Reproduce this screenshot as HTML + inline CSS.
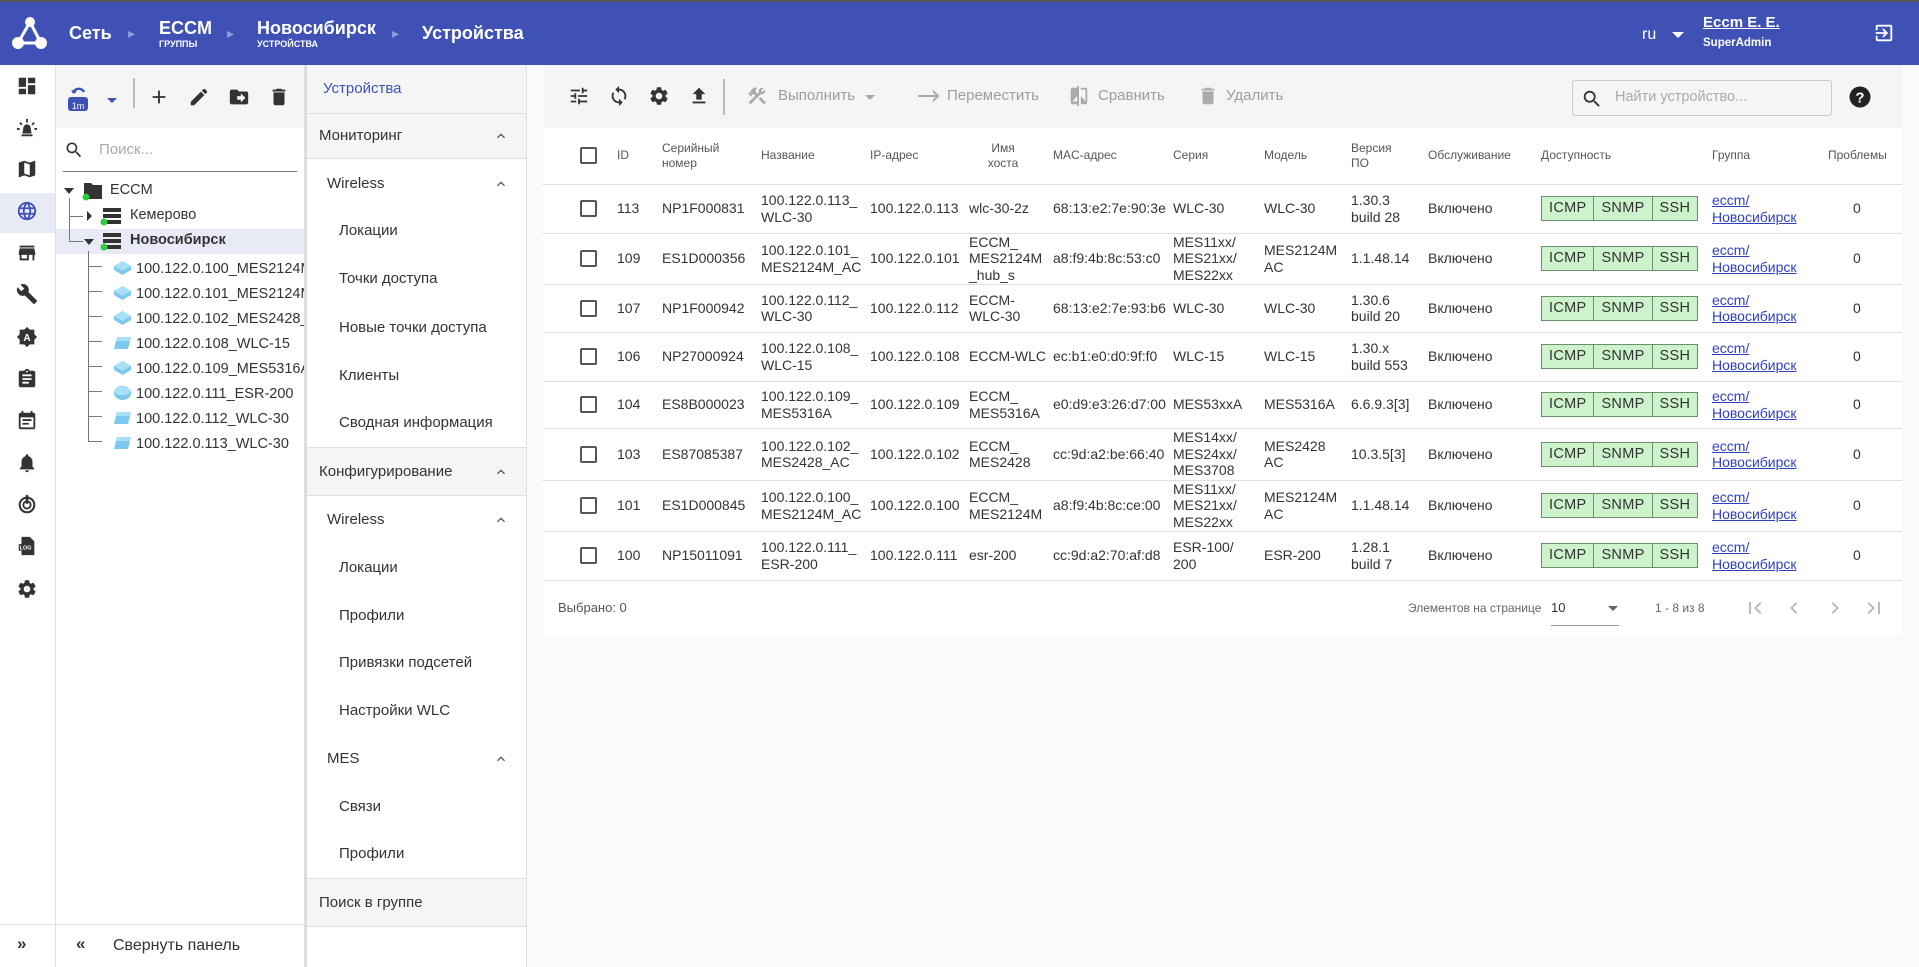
<!DOCTYPE html>
<html><head><meta charset="utf-8"><style>
*{box-sizing:border-box;margin:0;padding:0}
body{width:1919px;height:967px;overflow:hidden;font-family:"Liberation Sans",Arial,sans-serif;color:#333;background:#fafafa;position:relative;font-size:14px}
.a{position:absolute}
svg{display:block}
.hdr{left:0;top:0;width:1919px;height:65px;background:#3f51b5;border-top:2px solid #555;color:#fff}
.rail{left:0;top:65px;width:56px;height:902px;background:#fff;border-right:1px solid #e0e0e0}
.ri{position:absolute;left:16px;width:22px;height:22px}
.tree{left:56px;top:65px;width:248px;height:902px;background:#fff}
.menu{left:304px;top:65px;width:223px;height:902px;background:#fff;border-left:3px solid #ddd;border-right:1px solid #e0e0e0}
.mh{position:absolute;left:0;width:219px;background:#f5f5f5;border-bottom:1px solid #e0e0e0;font-size:15px;color:#333}
.mi{position:absolute;font-size:15px;color:#333}
.chev{position:absolute;left:186px;width:16px;height:16px}
.card{left:543px;top:65px;width:1359px;height:570px;background:#fff}
.tb{left:0;top:0;width:1359px;height:63px;background:#f5f5f5}
table{border-collapse:collapse;position:absolute;left:0;top:63px;width:1359px}
td,th{vertical-align:middle;text-align:left;font-weight:normal;line-height:16.5px;padding:0;border-bottom:1px solid #e0e0e0}
th{font-size:12px;color:#555;line-height:15px;height:56px}
.cb{width:17px;height:17px;border:2px solid #555;border-radius:2px;margin-left:37px}
.badge{display:inline-flex;border:1px solid #6b8f6b;background:#cdf3cd;height:25px;font-size:14.5px;letter-spacing:.3px}
.badge span{padding:0 7px;line-height:23px;border-right:1px solid #6b8f6b}
.badge span:last-child{border-right:none}
a{color:#3041c0;text-decoration:underline}
.trow{position:absolute;font-size:14.5px;color:#333;white-space:nowrap}
.dis{color:#9e9e9e}
</style></head><body>
<div class="a hdr">
 <svg class="a" style="left:11px;top:12px" width="38" height="38" viewBox="0 0 38 38"><g fill="#fff"><circle cx="19" cy="8" r="5"/><circle cx="7" cy="29" r="6"/><circle cx="30" cy="29" r="6"/></g><path d="M19 8L7 29M19 8l11 21M7 29h23" stroke="#fff" stroke-width="3" fill="none"/></svg>
 <div class="a" style="left:69px;top:21px;font-size:18px;font-weight:bold">Сеть</div>
 <div class="a" style="left:128px;top:23px;font-size:14px;color:#8f9ad6">▸</div>
 <div class="a" style="left:159px;top:16px;font-size:18px;font-weight:bold">ECCM</div>
 <div class="a" style="left:159px;top:37px;font-size:9px;font-weight:bold">ГРУППЫ</div>
 <div class="a" style="left:227px;top:23px;font-size:14px;color:#8f9ad6">▸</div>
 <div class="a" style="left:257px;top:16px;font-size:18px;font-weight:bold">Новосибирск</div>
 <div class="a" style="left:257px;top:37px;font-size:9px;font-weight:bold">УСТРОЙСТВА</div>
 <div class="a" style="left:392px;top:23px;font-size:14px;color:#8f9ad6">▸</div>
 <div class="a" style="left:422px;top:21px;font-size:18px;font-weight:bold">Устройства</div>
 <div class="a" style="left:1642px;top:24px;font-size:16px">ru</div>
 <div class="a" style="left:1672px;top:30px;width:0;height:0;border-left:6px solid transparent;border-right:6px solid transparent;border-top:6px solid #fff"></div>
 <div class="a" style="left:1703px;top:12px;font-size:15px;font-weight:bold;text-decoration:underline">Eccm E. E.</div>
 <div class="a" style="left:1703px;top:35px;font-size:11.5px;font-weight:bold">SuperAdmin</div>
 <svg class="a" style="left:1873px;top:20px" width="22" height="22" viewBox="0 0 24 24"><path d="M10.09 15.59L11.5 17l5-5-5-5-1.41 1.41L12.67 11H3v2h9.67l-2.58 2.59zM19 3H5c-1.11 0-2 .9-2 2v4h2V5h14v14H5v-4H3v4c0 1.1.89 2 2 2h14c1.1 0 2-.9 2-2V5c0-1.1-.9-2-2-2z" fill="#fff"/></svg>
</div>

<div class="a rail">
 <div class="a" style="left:0;top:128px;width:55px;height:40px;background:#e8eaf6"></div>
 <svg class="ri" style="top:10px" viewBox="0 0 24 24"><path fill="#333" d="M3 13h8V3H3v10zm0 8h8v-6H3v6zm10 0h8V11h-8v10zm0-18v6h8V3h-8z"/></svg>
 <svg class="ri" style="top:52px" viewBox="0 0 24 24"><path fill="#333" d="M6 19h12v2H6zM7 18l1-6a4 4 0 018 0l1 6zM11 2h2v4h-2zM3.5 6.9l1.4-1.4 2.3 2.3-1.4 1.4zM19.1 5.5l1.4 1.4-2.3 2.3-1.4-1.4zM1 12h3v2H1zm19 0h3v2h-3z"/></svg>
 <svg class="ri" style="top:93px" viewBox="0 0 24 24"><path fill="#333" d="M20.5 3l-.16.03L15 5.1 9 3 3.36 4.9c-.21.07-.36.25-.36.48V20.5c0 .28.22.5.5.5l.16-.03L9 18.9l6 2.1 5.64-1.9c.21-.07.36-.25.36-.48V3.5c0-.28-.22-.5-.5-.5zM15 19l-6-2.11V5l6 2.11V19z"/></svg>
 <svg class="ri" style="top:135px" viewBox="0 0 24 24"><path fill="#3f51b5" d="M11.99 2C6.47 2 2 6.48 2 12s4.47 10 9.990 10C17.52 22 22 17.52 22 12S17.52 2 11.99 2zm6.93 6h-2.95c-.32-1.25-.78-2.45-1.38-3.56 1.84.63 3.37 1.91 4.33 3.56zM12 4.04c.83 1.2 1.48 2.53 1.91 3.96h-3.82c.43-1.43 1.08-2.76 1.91-3.96zM4.26 14C4.1 13.36 4 12.69 4 12s.1-1.36.26-2h3.38c-.08.66-.14 1.32-.14 2 0 .68.06 1.34.14 2H4.26zm.82 2h2.95c.32 1.25.78 2.45 1.38 3.56-1.84-.63-3.37-1.9-4.33-3.56zm2.95-8H5.08c.96-1.66 2.49-2.93 4.33-3.56C8.81 5.55 8.35 6.75 8.03 8zM12 19.96c-.83-1.2-1.48-2.53-1.91-3.96h3.82c-.43 1.43-1.08 2.76-1.91 3.96zM14.34 14H9.66c-.09-.66-.16-1.32-.16-2 0-.68.07-1.35.16-2h4.68c.09.65.16 1.32.16 2 0 .68-.07 1.34-.16 2zm.25 5.56c.6-1.11 1.06-2.31 1.38-3.56h2.95c-.96 1.65-2.49 2.93-4.33 3.56zM16.36 14c.08-.66.14-1.32.14-2 0-.68-.06-1.34-.14-2h3.38c.16.64.26 1.31.26 2s-.1 1.36-.26 2h-3.38z"/></svg>
 <svg class="ri" style="top:177px" viewBox="0 0 24 24"><path fill="#333" d="M20 4H4v2h16V4zm1 10v-2l-1-5H4l-1 5v2h1v6h10v-6h4v6h2v-6h1zm-9 4H6v-4h6v4z"/></svg>
 <svg class="ri" style="top:218px" viewBox="0 0 24 24"><path fill="#333" d="M22.7 19l-9.1-9.1c.9-2.3.4-5-1.5-6.9-2-2-5-2.4-7.4-1.3L9 6 6 9 1.6 4.7C.4 7.1.9 10.1 2.9 12.1c1.9 1.9 4.6 2.4 6.9 1.5l9.1 9.1c.4.4 1 .4 1.4 0l2.3-2.3c.5-.4.5-1.1.1-1.4z"/></svg>
 <svg class="ri" style="top:261px" viewBox="0 0 24 24"><path fill="#333" d="M12 1l3 3h5v5l3 3-3 3v5h-5l-3 3-3-3H4v-5l-3-3 3-3V4h5z"/><text x="12" y="16.5" font-size="11" font-weight="bold" fill="#fff" text-anchor="middle" font-family="Liberation Sans">A</text></svg>
 <svg class="ri" style="top:303px" viewBox="0 0 24 24"><path fill="#333" d="M19 3h-4.18C14.4 1.84 13.3 1 12 1c-1.3 0-2.4.84-2.82 2H5c-1.1 0-2 .9-2 2v14c0 1.1.9 2 2 2h14c1.1 0 2-.9 2-2V5c0-1.1-.9-2-2-2zm-7 0c.55 0 1 .45 1 1s-.45 1-1 1-1-.45-1-1 .45-1 1-1zm2 14H7v-2h7v2zm3-4H7v-2h10v2zm0-4H7V7h10v2z"/></svg>
 <svg class="ri" style="top:345px" viewBox="0 0 24 24"><path fill="#333" d="M17 10H7v2h10v-2zm2-7h-1V1h-2v2H8V1H6v2H5c-1.11 0-1.99.9-1.99 2L3 19c0 1.1.89 2 2 2h14c1.1 0 2-.9 2-2V5c0-1.1-.9-2-2-2zm0 16H5V8h14v11zm-5-5H7v2h7v-2z"/></svg>
 <svg class="ri" style="top:387px" viewBox="0 0 24 24"><path fill="#333" d="M12 22c1.1 0 2-.9 2-2h-4c0 1.1.89 2 2 2zm6-6v-5c0-3.07-1.64-5.64-4.5-6.32V4c0-.83-.67-1.5-1.5-1.5s-1.5.67-1.5 1.5v.68C7.63 5.36 6 7.92 6 11v5l-2 2v1h16v-1l-2-2z"/></svg>
 <svg class="ri" style="top:428px" viewBox="0 0 24 24"><circle cx="12" cy="13" r="8" fill="none" stroke="#333" stroke-width="2.2"/><circle cx="12" cy="13" r="4" fill="none" stroke="#333" stroke-width="2"/><rect x="10.5" y="2" width="3" height="10" rx="1.5" fill="#333"/></svg>
 <svg class="ri" style="top:470px" viewBox="0 0 24 24"><path fill="#333" d="M6 2h9l5 5v15H6zM3 10h15v7H3z"/><text x="10.5" y="16" font-size="6" font-weight="bold" fill="#fff" text-anchor="middle" font-family="Liberation Sans">LOG</text></svg>
 <svg class="ri" style="top:513px" viewBox="0 0 24 24"><path fill="#333" d="M19.14 12.94c.04-.3.06-.61.06-.94 0-.32-.02-.64-.07-.94l2.03-1.58c.18-.14.23-.41.12-.61l-1.92-3.32c-.12-.22-.37-.29-.59-.22l-2.39.96c-.5-.38-1.03-.7-1.62-.94l-.36-2.54c-.04-.24-.24-.41-.48-.41h-3.84c-.24 0-.43.17-.47.41l-.36 2.54c-.59.24-1.13.57-1.62.94l-2.39-.96c-.22-.08-.47 0-.59.22L2.74 8.87c-.12.21-.08.47.12.61l2.03 1.58c-.05.3-.09.63-.09.94s.02.64.07.94l-2.03 1.58c-.18.14-.23.41-.12.61l1.92 3.32c.12.22.37.29.59.22l2.39-.96c.5.38 1.03.7 1.62.94l.36 2.54c.05.24.24.41.48.41h3.84c.24 0 .44-.17.47-.41l.36-2.54c.59-.24 1.13-.56 1.62-.94l2.39.96c.22.08.47 0 .59-.22l1.92-3.32c.12-.22.07-.47-.12-.61l-2.01-1.58zM12 15.6c-1.98 0-3.6-1.62-3.6-3.6s1.62-3.6 3.6-3.6 3.6 1.62 3.6 3.6-1.62 3.6-3.6 3.6z"/></svg>
 <div class="a" style="left:0;top:859px;width:55px;border-top:1px solid #e0e0e0"></div>
 <div class="a" style="left:17px;top:869px;font-size:17px;color:#333;font-weight:bold">»</div>
</div>

<div class="a tree">
 <div class="a" style="left:0;top:0;width:248px;height:63px;background:#f5f5f5"></div>
 <svg class="a" style="left:11px;top:20px" width="22" height="30" viewBox="0 0 22 30"><path d="M6 8a6 6 0 0111-1" stroke="#3f51b5" stroke-width="2.4" fill="none"/><path d="M4 5l3 4 3-3" fill="#3f51b5"/><rect x="1" y="12" width="20" height="14" rx="3" fill="#3f51b5"/><text x="11" y="24" font-size="9" fill="#fff" text-anchor="middle" font-family="Liberation Sans">1m</text></svg>
 <div class="a" style="left:51px;top:33px;border-left:5px solid transparent;border-right:5px solid transparent;border-top:5px solid #3f51b5"></div>
 <div class="a" style="left:77px;top:13px;height:30px;border-left:2px solid #bbb"></div>
 <svg class="a" style="left:92px;top:21px" width="22" height="22" viewBox="0 0 24 24"><path fill="#333" d="M19 13h-6v6h-2v-6H5v-2h6V5h2v6h6v2z"/></svg>
 <svg class="a" style="left:132px;top:21px" width="22" height="22" viewBox="0 0 24 24"><path fill="#333" d="M3 17.25V21h3.75L17.81 9.94l-3.75-3.75L3 17.25zM20.71 7.04a1 1 0 000-1.41l-2.34-2.34a1 1 0 00-1.41 0l-1.83 1.83 3.75 3.75 1.83-1.83z"/></svg>
 <svg class="a" style="left:172px;top:21px" width="22" height="22" viewBox="0 0 24 24"><path fill="#333" d="M20 6h-8l-2-2H4c-1.1 0-2 .9-2 2v12c0 1.1.9 2 2 2h16c1.1 0 2-.9 2-2V8c0-1.1-.9-2-2-2zm-6 12v-3h-4v-4h4V8l5 5-5 5z"/></svg>
 <svg class="a" style="left:212px;top:21px" width="22" height="22" viewBox="0 0 24 24"><path fill="#333" d="M6 19c0 1.1.9 2 2 2h8c1.1 0 2-.9 2-2V7H6v12zM19 4h-3.5l-1-1h-5l-1 1H5v2h14V4z"/></svg>
 <svg class="a" style="left:8px;top:75px" width="20" height="20" viewBox="0 0 24 24"><path fill="#333" d="M15.5 14h-.79l-.28-.27C15.41 12.59 16 11.11 16 9.5 16 5.91 13.09 3 9.5 3S3 5.91 3 9.5 5.91 16 9.5 16c1.61 0 3.09-.59 4.23-1.57l.27.28v.79l5 4.99L20.49 19l-4.99-5zm-6 0C7.01 14 5 11.99 5 9.5S7.01 5 9.5 5 14 7.01 14 9.5 11.99 14 9.5 14z"/></svg>
 <div class="a" style="left:43px;top:76px;font-size:15px;color:#aaa">Поиск...</div>
 <div class="a" style="left:7px;top:106px;width:234px;border-top:1px solid #777"></div>
 <div class="a" style="left:0;top:164px;width:248px;height:25px;background:#e8eaf6"></div>
 <div class="a" style="left:13px;top:133px;height:43px;border-left:1px solid #777"></div>
 <div class="a" style="left:13px;top:151px;width:14px;border-top:1px solid #777"></div>
 <div class="a" style="left:13px;top:176px;width:14px;border-top:1px solid #777"></div>
 <div class="a" style="left:32px;top:186px;height:191px;border-left:1px solid #777"></div>
 <div class="a" style="left:8px;top:123px;border-left:5px solid transparent;border-right:5px solid transparent;border-top:6px solid #333"></div>
 <svg class="a" style="left:26px;top:116px" width="22" height="20" viewBox="0 0 22 20"><path d="M2 2h7l2 2h9v14H2z" fill="#333"/><circle cx="4" cy="16" r="3.5" fill="#2ecc40"/></svg>
 <div class="trow" style="left:54px;top:117px">ECCM</div>
 <div class="a" style="left:31px;top:146px;border-top:5px solid transparent;border-bottom:5px solid transparent;border-left:5px solid #333"></div>
 <svg class="a" style="left:44px;top:141px" width="22" height="20" viewBox="0 0 22 20"><rect x="3" y="2" width="18" height="4" fill="#333"/><rect x="3" y="8" width="18" height="4" fill="#333"/><rect x="3" y="14" width="18" height="4" fill="#333"/><circle cx="4" cy="16" r="3.5" fill="#2ecc40"/></svg>
 <div class="trow" style="left:74px;top:142px">Кемерово</div>
 <div class="a" style="left:28px;top:174px;border-left:5px solid transparent;border-right:5px solid transparent;border-top:6px solid #333"></div>
 <svg class="a" style="left:44px;top:166px" width="22" height="20" viewBox="0 0 22 20"><rect x="3" y="2" width="18" height="4" fill="#333"/><rect x="3" y="8" width="18" height="4" fill="#333"/><rect x="3" y="14" width="18" height="4" fill="#333"/><circle cx="4" cy="16" r="3.5" fill="#2ecc40"/></svg>
 <div class="trow" style="left:74px;top:167px;font-weight:bold">Новосибирск</div>
 <div style="position:absolute;left:0;top:189px">
  <div class="a" style="left:32px;top:12px;width:14px;border-top:1px solid #777"></div>
  <div class="a" style="left:32px;top:37px;width:14px;border-top:1px solid #777"></div>
  <div class="a" style="left:32px;top:62px;width:14px;border-top:1px solid #777"></div>
  <div class="a" style="left:32px;top:87px;width:14px;border-top:1px solid #777"></div>
  <div class="a" style="left:32px;top:112px;width:14px;border-top:1px solid #777"></div>
  <div class="a" style="left:32px;top:137px;width:14px;border-top:1px solid #777"></div>
  <div class="a" style="left:32px;top:162px;width:14px;border-top:1px solid #777"></div>
  <div class="a" style="left:32px;top:187px;width:14px;border-top:1px solid #777"></div>
 </div>
 <div style="position:absolute;left:57px;top:192px;line-height:25px;font-size:14.5px;white-space:nowrap;width:191px;overflow:hidden">
  <div><svg style="display:inline-block;vertical-align:-3px;margin-right:4px" width="19" height="16" viewBox="0 0 19 16"><path d="M9.5 1L18 6v4l-8.5 5L1 10V6z" fill="#7cc8ee"/><path d="M9.5 1L18 6 9.5 11 1 6z" fill="#a8e0f8"/></svg>100.122.0.100_MES2124M</div>
  <div><svg style="display:inline-block;vertical-align:-3px;margin-right:4px" width="19" height="16" viewBox="0 0 19 16"><path d="M9.5 1L18 6v4l-8.5 5L1 10V6z" fill="#7cc8ee"/><path d="M9.5 1L18 6 9.5 11 1 6z" fill="#a8e0f8"/></svg>100.122.0.101_MES2124M</div>
  <div><svg style="display:inline-block;vertical-align:-3px;margin-right:4px" width="19" height="16" viewBox="0 0 19 16"><path d="M9.5 1L18 6v4l-8.5 5L1 10V6z" fill="#7cc8ee"/><path d="M9.5 1L18 6 9.5 11 1 6z" fill="#a8e0f8"/></svg>100.122.0.102_MES2428_AC</div>
  <div><svg style="display:inline-block;vertical-align:-3px;margin-right:4px" width="19" height="16" viewBox="0 0 19 16"><path d="M4 2h14l-3 12H1z" fill="#7cc8ee"/><path d="M4 2h14l-1 4H3z" fill="#a8e0f8"/></svg>100.122.0.108_WLC-15</div>
  <div><svg style="display:inline-block;vertical-align:-3px;margin-right:4px" width="19" height="16" viewBox="0 0 19 16"><path d="M9.5 1L18 6v4l-8.5 5L1 10V6z" fill="#7cc8ee"/><path d="M9.5 1L18 6 9.5 11 1 6z" fill="#a8e0f8"/></svg>100.122.0.109_MES5316A</div>
  <div><svg style="display:inline-block;vertical-align:-3px;margin-right:4px" width="19" height="16" viewBox="0 0 19 16"><ellipse cx="9.5" cy="8" rx="8.5" ry="7" fill="#7cc8ee"/><ellipse cx="9.5" cy="6" rx="7.5" ry="4.5" fill="#a8e0f8"/></svg>100.122.0.111_ESR-200</div>
  <div><svg style="display:inline-block;vertical-align:-3px;margin-right:4px" width="19" height="16" viewBox="0 0 19 16"><path d="M4 2h14l-3 12H1z" fill="#7cc8ee"/><path d="M4 2h14l-1 4H3z" fill="#a8e0f8"/></svg>100.122.0.112_WLC-30</div>
  <div><svg style="display:inline-block;vertical-align:-3px;margin-right:4px" width="19" height="16" viewBox="0 0 19 16"><path d="M4 2h14l-3 12H1z" fill="#7cc8ee"/><path d="M4 2h14l-1 4H3z" fill="#a8e0f8"/></svg>100.122.0.113_WLC-30</div>
 </div>
 <div class="a" style="left:0;top:859px;width:248px;border-top:1px solid #e0e0e0"></div>
 <div class="a" style="left:20px;top:869px;font-size:17px;color:#333;font-weight:bold">«</div>
 <div class="a" style="left:57px;top:872px;font-size:16px;color:#333">Свернуть панель</div>
</div>

<div class="a menu">
 <div class="mh" style="top:0;height:49px"></div>
 <div class="mi" style="left:16px;top:15px;color:#3f51b5">Устройства</div>
 <div class="mh" style="top:49px;height:45px"></div>
 <div class="mi" style="left:12px;top:62px">Мониторинг</div>
 <svg class="chev" style="top:63px" viewBox="0 0 24 24"><path d="M7.41 15.41L12 10.83l4.59 4.58L18 14l-6-6-6 6z" fill="#555"/></svg>
 <div class="mi" style="left:20px;top:110px">Wireless</div>
 <svg class="chev" style="top:111px" viewBox="0 0 24 24"><path d="M7.41 15.41L12 10.83l4.59 4.58L18 14l-6-6-6 6z" fill="#555"/></svg>
 <div class="mi" style="left:32px;top:157px">Локации</div>
 <div class="mi" style="left:32px;top:205px">Точки доступа</div>
 <div class="mi" style="left:32px;top:254px">Новые точки доступа</div>
 <div class="mi" style="left:32px;top:302px">Клиенты</div>
 <div class="mi" style="left:32px;top:349px">Сводная информация</div>
 <div class="mh" style="top:382px;height:49px;border-top:1px solid #e0e0e0"></div>
 <div class="mi" style="left:12px;top:398px">Конфигурирование</div>
 <svg class="chev" style="top:399px" viewBox="0 0 24 24"><path d="M7.41 15.41L12 10.83l4.59 4.58L18 14l-6-6-6 6z" fill="#555"/></svg>
 <div class="mi" style="left:20px;top:446px">Wireless</div>
 <svg class="chev" style="top:447px" viewBox="0 0 24 24"><path d="M7.41 15.41L12 10.83l4.59 4.58L18 14l-6-6-6 6z" fill="#555"/></svg>
 <div class="mi" style="left:32px;top:494px">Локации</div>
 <div class="mi" style="left:32px;top:542px">Профили</div>
 <div class="mi" style="left:32px;top:589px">Привязки подсетей</div>
 <div class="mi" style="left:32px;top:637px">Настройки WLC</div>
 <div class="mi" style="left:20px;top:685px">MES</div>
 <svg class="chev" style="top:686px" viewBox="0 0 24 24"><path d="M7.41 15.41L12 10.83l4.59 4.58L18 14l-6-6-6 6z" fill="#555"/></svg>
 <div class="mi" style="left:32px;top:733px">Связи</div>
 <div class="mi" style="left:32px;top:780px">Профили</div>
 <div class="mh" style="top:813px;height:49px;border-top:1px solid #e0e0e0"></div>
 <div class="mi" style="left:12px;top:829px">Поиск в группе</div>
</div>

<div class="a card">
 <div class="a tb">
  <svg class="a" style="left:25px;top:20px" width="22" height="22" viewBox="0 0 24 24"><path fill="#333" d="M3 17v2h6v-2H3zM3 5v2h10V5H3zm10 16v-2h8v-2h-8v-2h-2v6h2zM7 9v2H3v2h4v2h2V9H7zm14 4v-2H11v2h10zm-6-4h2V7h4V5h-4V3h-2v6z"/></svg>
  <svg class="a" style="left:65px;top:20px" width="22" height="22" viewBox="0 0 24 24"><path fill="#333" d="M12 4V1L8 5l4 4V6c3.31 0 6 2.69 6 6 0 1.01-.25 1.97-.7 2.8l1.46 1.46C19.54 15.03 20 13.57 20 12c0-4.42-3.58-8-8-8zm0 14c-3.31 0-6-2.69-6-6 0-1.01.25-1.97.7-2.8L5.24 7.74C4.46 8.97 4 10.43 4 12c0 4.42 3.58 8 8 8v3l4-4-4-4v3z"/></svg>
  <svg class="a" style="left:105px;top:20px" width="22" height="22" viewBox="0 0 24 24"><path fill="#333" d="M19.14 12.94c.04-.3.06-.61.06-.94 0-.32-.02-.64-.07-.94l2.03-1.58c.18-.14.23-.41.12-.61l-1.92-3.32c-.12-.22-.37-.29-.59-.22l-2.39.96c-.5-.38-1.03-.7-1.62-.94l-.36-2.54c-.04-.24-.24-.41-.48-.41h-3.84c-.24 0-.43.17-.47.41l-.36 2.54c-.59.24-1.13.57-1.62.94l-2.39-.96c-.22-.08-.47 0-.59.22L2.74 8.87c-.12.21-.08.47.12.61l2.03 1.58c-.05.3-.09.63-.09.94s.02.64.07.94l-2.03 1.58c-.18.14-.23.41-.12.61l1.92 3.32c.12.22.37.29.59.22l2.39-.96c.5.38 1.03.7 1.62.94l.36 2.54c.05.24.24.41.48.41h3.84c.24 0 .44-.17.47-.41l.36-2.54c.59-.24 1.13-.56 1.62-.94l2.39.96c.22.08.47 0 .59-.22l1.92-3.32c.12-.22.07-.47-.12-.61l-2.01-1.58zM12 15.6c-1.98 0-3.6-1.62-3.6-3.6s1.62-3.6 3.6-3.6 3.6 1.62 3.6 3.6-1.62 3.6-3.6 3.6z"/></svg>
  <svg class="a" style="left:145px;top:20px" width="22" height="22" viewBox="0 0 24 24"><path fill="#333" d="M5 20h14v-2H5v2zm0-10h4v6h6v-6h4l-7-7-7 7z"/></svg>
  <div class="a" style="left:180px;top:14px;height:36px;border-left:2px solid #bbb"></div>
  <svg class="a" style="left:203px;top:20px" width="22" height="22" viewBox="0 0 24 24"><path fill="#aaa" d="M13.78 15.3l6 6 2.11-2.16-6-6zM17.5 10c1.93 0 3.5-1.57 3.5-3.5 0-.58-.16-1.12-.41-1.6l-2.7 2.7-1.49-1.49 2.7-2.7c-.48-.25-1.02-.41-1.6-.41C15.57 3 14 4.57 14 6.5c0 .41.08.8.21 1.16l-1.85 1.85-1.78-1.78.71-.71-1.41-1.41L12 3.49a3 3 0 00-4.24 0L4.22 7.03l1.41 1.41H2.81l-.71.71 3.54 3.54.71-.71V9.15l1.41 1.41.71-.71 1.78 1.78-7.41 7.41 2.12 2.12L16.34 9.79c.36.13.75.21 1.16.21z"/></svg>
  <div class="a dis" style="left:235px;top:22px;font-size:15px">Выполнить</div>
  <div class="a" style="left:322px;top:30px;border-left:5px solid transparent;border-right:5px solid transparent;border-top:5px solid #aaa"></div>
  <svg class="a" style="left:375px;top:24px" width="24" height="14" viewBox="0 0 24 14"><path d="M0 7h20M15 2l5 5-5 5" stroke="#aaa" stroke-width="2" fill="none"/></svg>
  <div class="a dis" style="left:404px;top:22px;font-size:15px">Переместить</div>
  <svg class="a" style="left:525px;top:20px" width="22" height="22" viewBox="0 0 24 24"><path fill="#aaa" d="M10 3H5c-1.1 0-2 .9-2 2v14c0 1.1.9 2 2 2h5v2h2V1h-2v2zm0 15H5l5-6v6zm9-15h-5v2h5v13l-5-6v9h5c1.1 0 2-.9 2-2V5c0-1.1-.9-2-2-2z"/></svg>
  <div class="a dis" style="left:555px;top:22px;font-size:15px">Сравнить</div>
  <svg class="a" style="left:654px;top:20px" width="22" height="22" viewBox="0 0 24 24"><path fill="#aaa" d="M6 19c0 1.1.9 2 2 2h8c1.1 0 2-.9 2-2V7H6v12zM19 4h-3.5l-1-1h-5l-1 1H5v2h14V4z"/></svg>
  <div class="a dis" style="left:683px;top:22px;font-size:15px">Удалить</div>
  <div class="a" style="left:1029px;top:15px;width:260px;height:36px;border:1px solid #ccc;border-radius:3px;background:#f5f5f5"></div>
  <svg class="a" style="left:1038px;top:23px" width="22" height="22" viewBox="0 0 24 24"><path fill="#333" d="M15.5 14h-.79l-.28-.27C15.41 12.59 16 11.11 16 9.5 16 5.91 13.09 3 9.5 3S3 5.91 3 9.5 5.91 16 9.5 16c1.61 0 3.09-.59 4.23-1.57l.27.28v.79l5 4.99L20.49 19l-4.99-5zm-6 0C7.01 14 5 11.99 5 9.5S7.01 5 9.5 5 14 7.01 14 9.5 11.99 14 9.5 14z"/></svg>
  <div class="a" style="left:1072px;top:24px;font-size:14.5px;color:#aaa">Найти устройство...</div>
  <svg class="a" style="left:1305px;top:20px" width="24" height="24" viewBox="0 0 24 24"><circle cx="12" cy="12" r="10.5" fill="#222"/><text x="12" y="17.5" font-size="15" font-weight="bold" fill="#fff" text-anchor="middle" font-family="Liberation Sans">?</text></svg>
 </div>
 <table>
  <colgroup><col style="width:74px"><col style="width:45px"><col style="width:99px"><col style="width:109px"><col style="width:99px"><col style="width:84px"><col style="width:120px"><col style="width:91px"><col style="width:87px"><col style="width:77px"><col style="width:113px"><col style="width:171px"><col style="width:111px"><col></colgroup>
  <tr><th><div class="cb"></div></th><th>ID</th><th>Серийный<br>номер</th><th>Название</th><th>IP-адрес</th><th style="text-align:center;padding-right:16px">Имя<br>хоста</th><th>MAC-адрес</th><th>Серия</th><th>Модель</th><th>Версия<br>ПО</th><th>Обслуживание</th><th>Доступность</th><th>Группа</th><th style="padding-left:5px">Проблемы</th></tr>
  <tr style="height:49px"><td><div class="cb"></div></td><td>113</td><td>NP1F000831</td><td>100.122.0.113_<br>WLC-30</td><td>100.122.0.113</td><td>wlc-30-2z</td><td>68:13:e2:7e:90:3e</td><td>WLC-30</td><td>WLC-30</td><td>1.30.3<br>build 28</td><td>Включено</td><td><span class="badge"><span>ICMP</span><span>SNMP</span><span>SSH</span></span></td><td><a>eccm/<br>Новосибирск</a></td><td style="padding-left:30px">0</td></tr>
  <tr style="height:51px"><td><div class="cb"></div></td><td>109</td><td>ES1D000356</td><td>100.122.0.101_<br>MES2124M_AC</td><td>100.122.0.101</td><td>ECCM_<br>MES2124M<br>_hub_s</td><td>a8:f9:4b:8c:53:c0</td><td>MES11xx/<br>MES21xx/<br>MES22xx</td><td>MES2124M<br>AC</td><td>1.1.48.14</td><td>Включено</td><td><span class="badge"><span>ICMP</span><span>SNMP</span><span>SSH</span></span></td><td><a>eccm/<br>Новосибирск</a></td><td style="padding-left:30px">0</td></tr>
  <tr style="height:48px"><td><div class="cb"></div></td><td>107</td><td>NP1F000942</td><td>100.122.0.112_<br>WLC-30</td><td>100.122.0.112</td><td>ECCM-<br>WLC-30</td><td>68:13:e2:7e:93:b6</td><td>WLC-30</td><td>WLC-30</td><td>1.30.6<br>build 20</td><td>Включено</td><td><span class="badge"><span>ICMP</span><span>SNMP</span><span>SSH</span></span></td><td><a>eccm/<br>Новосибирск</a></td><td style="padding-left:30px">0</td></tr>
  <tr style="height:49px"><td><div class="cb"></div></td><td>106</td><td>NP27000924</td><td>100.122.0.108_<br>WLC-15</td><td>100.122.0.108</td><td>ECCM-WLC</td><td>ec:b1:e0:d0:9f:f0</td><td>WLC-15</td><td>WLC-15</td><td>1.30.x<br>build 553</td><td>Включено</td><td><span class="badge"><span>ICMP</span><span>SNMP</span><span>SSH</span></span></td><td><a>eccm/<br>Новосибирск</a></td><td style="padding-left:30px">0</td></tr>
  <tr style="height:47px"><td><div class="cb"></div></td><td>104</td><td>ES8B000023</td><td>100.122.0.109_<br>MES5316A</td><td>100.122.0.109</td><td>ECCM_<br>MES5316A</td><td>e0:d9:e3:26:d7:00</td><td>MES53xxA</td><td>MES5316A</td><td>6.6.9.3[3]</td><td>Включено</td><td><span class="badge"><span>ICMP</span><span>SNMP</span><span>SSH</span></span></td><td><a>eccm/<br>Новосибирск</a></td><td style="padding-left:30px">0</td></tr>
  <tr style="height:52px"><td><div class="cb"></div></td><td>103</td><td>ES87085387</td><td>100.122.0.102_<br>MES2428_AC</td><td>100.122.0.102</td><td>ECCM_<br>MES2428</td><td>cc:9d:a2:be:66:40</td><td>MES14xx/<br>MES24xx/<br>MES3708</td><td>MES2428<br>AC</td><td>10.3.5[3]</td><td>Включено</td><td><span class="badge"><span>ICMP</span><span>SNMP</span><span>SSH</span></span></td><td><a>eccm/<br>Новосибирск</a></td><td style="padding-left:30px">0</td></tr>
  <tr style="height:51px"><td><div class="cb"></div></td><td>101</td><td>ES1D000845</td><td>100.122.0.100_<br>MES2124M_AC</td><td>100.122.0.100</td><td>ECCM_<br>MES2124M</td><td>a8:f9:4b:8c:ce:00</td><td>MES11xx/<br>MES21xx/<br>MES22xx</td><td>MES2124M<br>AC</td><td>1.1.48.14</td><td>Включено</td><td><span class="badge"><span>ICMP</span><span>SNMP</span><span>SSH</span></span></td><td><a>eccm/<br>Новосибирск</a></td><td style="padding-left:30px">0</td></tr>
  <tr style="height:49px"><td><div class="cb"></div></td><td>100</td><td>NP15011091</td><td>100.122.0.111_<br>ESR-200</td><td>100.122.0.111</td><td>esr-200</td><td>cc:9d:a2:70:af:d8</td><td>ESR-100/<br>200</td><td>ESR-200</td><td>1.28.1<br>build 7</td><td>Включено</td><td><span class="badge"><span>ICMP</span><span>SNMP</span><span>SSH</span></span></td><td><a>eccm/<br>Новосибирск</a></td><td style="padding-left:30px">0</td></tr>
 </table>
 <div class="a" style="left:15px;top:535px;font-size:13px;color:#555">Выбрано: 0</div>
 <div class="a" style="left:865px;top:536px;font-size:12px;color:#666">Элементов на странице</div>
 <div class="a" style="left:1008px;top:535px;font-size:13px;color:#333">10</div>
 <div class="a" style="left:1065px;top:541px;border-left:5px solid transparent;border-right:5px solid transparent;border-top:5px solid #666"></div>
 <div class="a" style="left:1008px;top:560px;width:68px;border-top:1px solid #999"></div>
 <div class="a" style="left:1112px;top:536px;font-size:12px;color:#666">1 - 8 из 8</div>
 <svg class="a" style="left:1200px;top:531px" width="24" height="24" viewBox="0 0 24 24"><path fill="#bbb" d="M18.41 16.59L13.82 12l4.59-4.59L17 6l-6 6 6 6zM6 6h2v12H6z"/></svg>
 <svg class="a" style="left:1239px;top:531px" width="24" height="24" viewBox="0 0 24 24"><path fill="#bbb" d="M15.41 7.41L14 6l-6 6 6 6 1.41-1.41L10.83 12z"/></svg>
 <svg class="a" style="left:1280px;top:531px" width="24" height="24" viewBox="0 0 24 24"><path fill="#bbb" d="M10 6L8.59 7.41 13.17 12l-4.58 4.59L10 18l6-6z"/></svg>
 <svg class="a" style="left:1319px;top:531px" width="24" height="24" viewBox="0 0 24 24"><path fill="#bbb" d="M5.59 7.41L10.18 12l-4.59 4.59L7 18l6-6-6-6zM16 6h2v12h-2z"/></svg>
</div>
</body></html>
